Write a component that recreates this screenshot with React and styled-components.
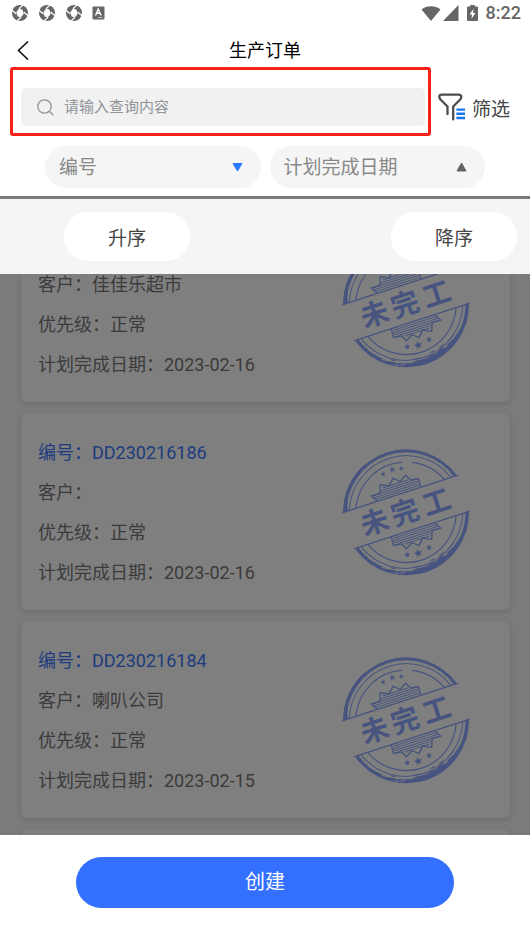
import React from "react";
import styled, { createGlobalStyle } from "styled-components";

const GlobalStyle = createGlobalStyle`
  * {
    box-sizing: border-box;
  }

  body {
    margin: 0;
    background: #fff;
    color: #444;
    font-family: Roboto, "Noto Sans CJK SC", sans-serif;
  }

  button,
  input,
  select {
    margin: 0;
    padding: 0;
    border: 0;
    background: none;
    color: inherit;
    font-family: inherit;
  }
`;

const Page = styled.div`
  display: flex;
  flex-direction: column;
  height: 100vh;
`;

const StatusBar = styled.div`
  display: flex;
  align-items: center;
  justify-content: space-between;
  height: 32px;
  padding: 0 9px 6px 11px;
  color: #666;
`;

const StatusGroup = styled.div`
  display: flex;
  align-items: center;
  gap: ${(props) => props.$gap}px;

  svg {
    display: block;
  }
`;

const Clock = styled.span`
  font-size: 18px;
  font-weight: 500;
  line-height: 20px;
`;

const TitleBar = styled.header`
  display: grid;
  grid-template-columns: 48px 1fr 48px;
  align-items: center;
  height: 35px;
`;

const BackButton = styled.button`
  display: flex;
  padding-left: 16px;
`;

const Title = styled.h1`
  margin: 0;
  padding-top: 2px;
  color: #000;
  font-size: 18px;
  font-weight: 400;
  line-height: 24px;
  text-align: center;
`;

const SearchRow = styled.div`
  display: flex;
  gap: 7px;
  padding: 0 20px 0 10px;
`;

const SearchFrame = styled.div`
  flex: 1;
  padding: 18px 3px 7px 8px;
  border: 3px solid #fb2016;
  border-radius: 3px;
`;

const SearchBox = styled.label`
  display: flex;
  align-items: center;
  gap: 10px;
  height: 38px;
  padding: 0 16px;
  border-radius: 5px;
  background: #f1f1f1;
`;

const SearchInput = styled.input`
  flex: 1;
  min-width: 0;
  font-size: 15px;
  line-height: 24px;
  outline: none;

  &::placeholder {
    color: #909399;
    opacity: 1;
  }
`;

const FilterButton = styled.button`
  display: flex;
  align-items: center;
  gap: 6px;
  padding-top: 11px;
  font-size: 19px;
`;

const SortFields = styled.div`
  display: flex;
  gap: 9px;
  padding: 10px 45px 8px;
`;

const SortField = styled.label`
  display: flex;
  flex: 1;
  align-items: center;
  height: 42px;
  padding: 0 18px 0 14px;
  border-radius: 21px;
  background: #f5f5f5;
`;

const SortSelect = styled.select`
  flex: 1;
  min-width: 0;
  height: 42px;
  appearance: none;
  color: #888;
  font-size: 19px;
  outline: none;
`;

const Main = styled.main`
  position: relative;
  flex: 1;
  min-height: 0;
  overflow: hidden;
  background: #f6f6f6;
`;

const OrderList = styled.div`
  display: flex;
  flex-direction: column;
  gap: 11px;
  padding: 9px 20px 0 21px;
`;

const OrderCard = styled.article`
  display: flex;
  align-items: center;
  justify-content: space-between;
  flex-shrink: 0;
  min-height: 197px;
  padding: 0 39px 0 17px;
  border-radius: 7px;
  background: #fff;
  box-shadow: 0 2px 6px rgba(0, 0, 0, 0.12);
`;

const OrderInfo = styled.div`
  padding-top: 2px;
`;

const OrderLine = styled.p`
  min-height: 40px;
  margin: 0;
  color: ${(props) => (props.$link ? "#3f78ff" : "#777")};
  font-size: 18px;
  line-height: 40px;
  white-space: nowrap;
`;

const Mask = styled.div`
  position: absolute;
  inset: 0;
  padding-top: 3px;
  background: rgba(0, 0, 0, 0.5);
`;

const SortPanel = styled.div`
  display: flex;
  justify-content: space-between;
  padding: 13px 13px 13px 64px;
  background: #f5f5f5;
`;

const SortButton = styled.button`
  width: 126px;
  height: 49px;
  border-radius: 24px;
  background: #fff;
  font-size: 19px;
`;

const Footer = styled.footer`
  padding: 22px 76px 34px;
  background: #fff;
`;

const CreateButton = styled.button`
  width: 100%;
  height: 51px;
  padding-bottom: 4px;
  border-radius: 26px;
  background: #3370ff;
  color: #fff;
  font-size: 20px;
`;

const ORDERS = [
  { id: 1, customer: "佳佳乐超市", priority: "正常", date: "2023-02-16" },
  {
    id: 2,
    code: "DD230216186",
    customer: "",
    priority: "正常",
    date: "2023-02-16",
  },
  {
    id: 3,
    code: "DD230216184",
    customer: "喇叭公司",
    priority: "正常",
    date: "2023-02-15",
  },
  { id: 4 },
];

const SyncIcon = () => (
  <svg width="18" height="18" viewBox="-9 -9 18 18">
    <circle r="8" fill="currentColor" />
    <path
      d="M-3.6 -1 L-1 -4.2 L2.4 -3.6 L3.6 1 L1 4.2 L-2.4 3.6 Z"
      fill="#fff"
    />
    <path
      d="M-1 -4.2 L3.4 -8.4 M3.6 -1 L8.4 3 M1 4.2 L-3.4 8.4 M-3.6 1 L-8.4 -3"
      stroke="#fff"
      strokeWidth="1.3"
    />
  </svg>
);

const InputMethodIcon = () => (
  <svg width="13" height="14" viewBox="0 0 13 14">
    <rect width="12" height="13" x="0.5" y="0.5" rx="1" fill="currentColor" />
    <path
      d="M3.5 9.5 L6.2 3 L9 9.5 M4.5 7.3 H8"
      fill="none"
      stroke="#fff"
      strokeWidth="1.4"
    />
    <path d="M6 11.5 H11" stroke="#bbb" strokeWidth="1" />
  </svg>
);

const WifiIcon = () => (
  <svg width="20" height="15" viewBox="0 0 20 15">
    <path d="M10 15 L0.5 3.5 C6 -0.8 14 -0.8 19.5 3.5 Z" fill="currentColor" />
  </svg>
);

const SignalIcon = () => (
  <svg width="16" height="16" viewBox="0 0 16 16">
    <path d="M15.5 0 V16 H0 Z" fill="currentColor" />
  </svg>
);

const BatteryIcon = () => (
  <svg width="11" height="16" viewBox="0 0 11 16">
    <path
      d="M3.2 0 H7.8 V1.6 H10 Q11 1.6 11 2.6 V15 Q11 16 10 16 H1 Q0 16 0 15 V2.6 Q0 1.6 1 1.6 H3.2 Z"
      fill="currentColor"
    />
    <path d="M6.6 3.8 L2.6 9.4 H5 L4.6 13.6 L8.6 8 H6 Z" fill="#fff" />
  </svg>
);

const BackIcon = () => (
  <svg width="14" height="20" viewBox="0 0 14 20">
    <path
      d="M12 1.5 L2.5 10.5 L12 19.5"
      fill="none"
      stroke="#111"
      strokeWidth="1.6"
    />
  </svg>
);

const SearchIcon = () => (
  <svg width="17" height="17" viewBox="0 0 17 17">
    <g fill="none" stroke="#909399" strokeWidth="1.3" strokeLinecap="round">
      <circle cx="7.5" cy="7.5" r="6.7" />
      <path d="M12.5 12.5 L16 15.7" />
    </g>
  </svg>
);

const FilterIcon = () => (
  <svg width="28" height="28" viewBox="0 0 28 28">
    <path
      d="M9.5 21 V13.5 L2 6 Q0.2 1.8 3.4 1.6 H20.6 Q24.6 1.8 22.6 6 L15.2 13.5 V26.4"
      fill="none"
      stroke="#4d4d4d"
      strokeWidth="2.3"
      strokeLinecap="round"
      strokeLinejoin="round"
    />
    <path
      d="M18.4 16.6 H27 M18.4 20.8 H27 M18.4 25 H27"
      stroke="#1677ea"
      strokeWidth="2.4"
    />
  </svg>
);

const Triangle = ({ up }) => (
  <svg width="11" height="10" viewBox="0 0 11 10">
    <path
      d={up ? "M5.5 1 L10 9 H1 Z" : "M5.5 9 L10 1.5 H1 Z"}
      fill={up ? "#606266" : "#2979ff"}
      stroke={up ? "#606266" : "#2979ff"}
      strokeLinejoin="round"
    />
  </svg>
);

const STAR =
  "M0 -3 L0.8 -1 L2.9 -0.9 L1.2 0.5 L1.8 2.5 L0 1.3 L-1.8 2.5 L-1.2 0.5 L-2.9 -0.9 L-0.8 -1 Z";

// One half of the stamp, drawn above the ribbon.
const StampHalf = () => (
  <>
    <path d="M-61 -19 H61" strokeWidth="1.3" />
    <path d="M-58 -19 A61 61 0 0 1 58 -19" strokeWidth="3" />
    <path d="M-53.5 -19 A57 57 0 0 1 53.5 -19" strokeWidth="1" />
    <path
      d="M-24 -19 L-28 -26 L-19 -26 L-16 -34 L-8 -30 L-2 -36 L4 -31 L11 -35 L14 -29 L22 -28 L22 -19"
      strokeWidth="1.4"
    />
    <path
      d="M-25 -21.2 H21 M-26 -23.4 H21 M-26 -25.6 H21 M-17 -27.8 H20 M-15 -30 H12"
      strokeWidth="0.9"
    />
  </>
);

const Stamp = () => (
  <svg width="130" height="130" viewBox="-65 -65 130 130">
    <g transform="rotate(-18)" fill="none" stroke="#8ca8ff">
      <StampHalf />
      <g transform="rotate(180)">
        <StampHalf />
      </g>
      <path d="M-46.5 -19 A50 50 0 0 1 12 -48.5" strokeWidth="1.2" />
      <path d="M21 -45.4 A50 50 0 0 1 46.5 -19" strokeWidth="1.2" />
      <path d="M-46.5 19 A50 50 0 0 0 46.5 19" strokeWidth="1.2" />
      <g fill="#8ca8ff" stroke="none">
        <path d="M-60 -19 A62.5 62.5 0 0 1 -22 -59 L-31 -52 L-34 -51 L-42 -43 L-44 -42 L-50 -33 L-54 -24 L-55 -19 Z" />
        <path d="M-59 21 A62.5 62.5 0 0 0 60 19 L57 23 L51 33 L43 41 L35 47.5 L28 50.5 L25 53.5 L19 53 L14 56 L7 56.5 L2 58 L-7 57 L-13 58 L-20 55.5 L-27 54.5 L-33 50 L-39 47.5 L-46 39 L-53 29 Z" />
        <path d="M-33 47 L-27 50.5 L-29 51 Z M-12 54.5 L-2 55.2 L-6 56 Z M6 54.6 L12 52.4 L13 54 Z M16 52 L24 49.5 L21 52 Z M28 48 L35 43.6 L33 46.5 Z" />
        <path d={STAR} transform="translate(-10 -43) scale(0.9)" />
        <path d={STAR} transform="translate(0 -44.5) scale(1.1)" />
        <path d={STAR} transform="translate(9 -43) scale(0.9)" />
        <path d={STAR} transform="translate(-12 41) scale(1.1)" />
        <path d={STAR} transform="translate(-1 43) scale(1.5)" />
        <path d={STAR} transform="translate(11 41) scale(1.1)" />
        <text
          x="-33 -1 32"
          y="10"
          textAnchor="middle"
          fontFamily="'Noto Sans CJK SC', sans-serif"
          fontSize="28"
          fontWeight="700"
        >
          未完工
        </text>
      </g>
      <path
        d="M-50 32 L-45 38 M-40 45 L-34 49 M-24 57 L-19 56 M-30 54 L-26 56"
        stroke="#fff"
        strokeWidth="1"
      />
    </g>
  </svg>
);

const Order = ({ order }) => (
  <OrderCard>
    <OrderInfo>
      <OrderLine $link>{order.code && `编号：${order.code}`}</OrderLine>
      {order.date && (
        <>
          <OrderLine>客户：{order.customer}</OrderLine>
          <OrderLine>优先级：{order.priority}</OrderLine>
          <OrderLine>计划完成日期：{order.date}</OrderLine>
        </>
      )}
    </OrderInfo>
    {order.date && <Stamp />}
  </OrderCard>
);

const App = () => {
  return (
    <Page>
      <GlobalStyle />
      <StatusBar>
        <StatusGroup $gap={9}>
          <SyncIcon />
          <SyncIcon />
          <SyncIcon />
          <InputMethodIcon />
        </StatusGroup>
        <StatusGroup $gap={8}>
          <StatusGroup $gap={2}>
            <WifiIcon />
            <SignalIcon />
          </StatusGroup>
          <BatteryIcon />
          <Clock>8:22</Clock>
        </StatusGroup>
      </StatusBar>

      <TitleBar>
        <BackButton type="button" aria-label="返回">
          <BackIcon />
        </BackButton>
        <Title>生产订单</Title>
      </TitleBar>

      <SearchRow>
        <SearchFrame>
          <SearchBox>
            <SearchIcon />
            <SearchInput
              type="text"
              placeholder="请输入查询内容"
              aria-label="查询内容"
            />
          </SearchBox>
        </SearchFrame>
        <FilterButton type="button">
          <FilterIcon />
          筛选
        </FilterButton>
      </SearchRow>

      <SortFields>
        <SortField>
          <SortSelect aria-label="编号">
            <option>编号</option>
          </SortSelect>
          <Triangle />
        </SortField>
        <SortField>
          <SortSelect aria-label="计划完成日期">
            <option>计划完成日期</option>
          </SortSelect>
          <Triangle up />
        </SortField>
      </SortFields>

      <Main>
        <OrderList>
          {ORDERS.map((order) => (
            <Order key={order.id} order={order} />
          ))}
        </OrderList>
        <Mask>
          <SortPanel>
            <SortButton type="button">升序</SortButton>
            <SortButton type="button">降序</SortButton>
          </SortPanel>
        </Mask>
      </Main>

      <Footer>
        <CreateButton type="button">创建</CreateButton>
      </Footer>
    </Page>
  );
};

export default App;
